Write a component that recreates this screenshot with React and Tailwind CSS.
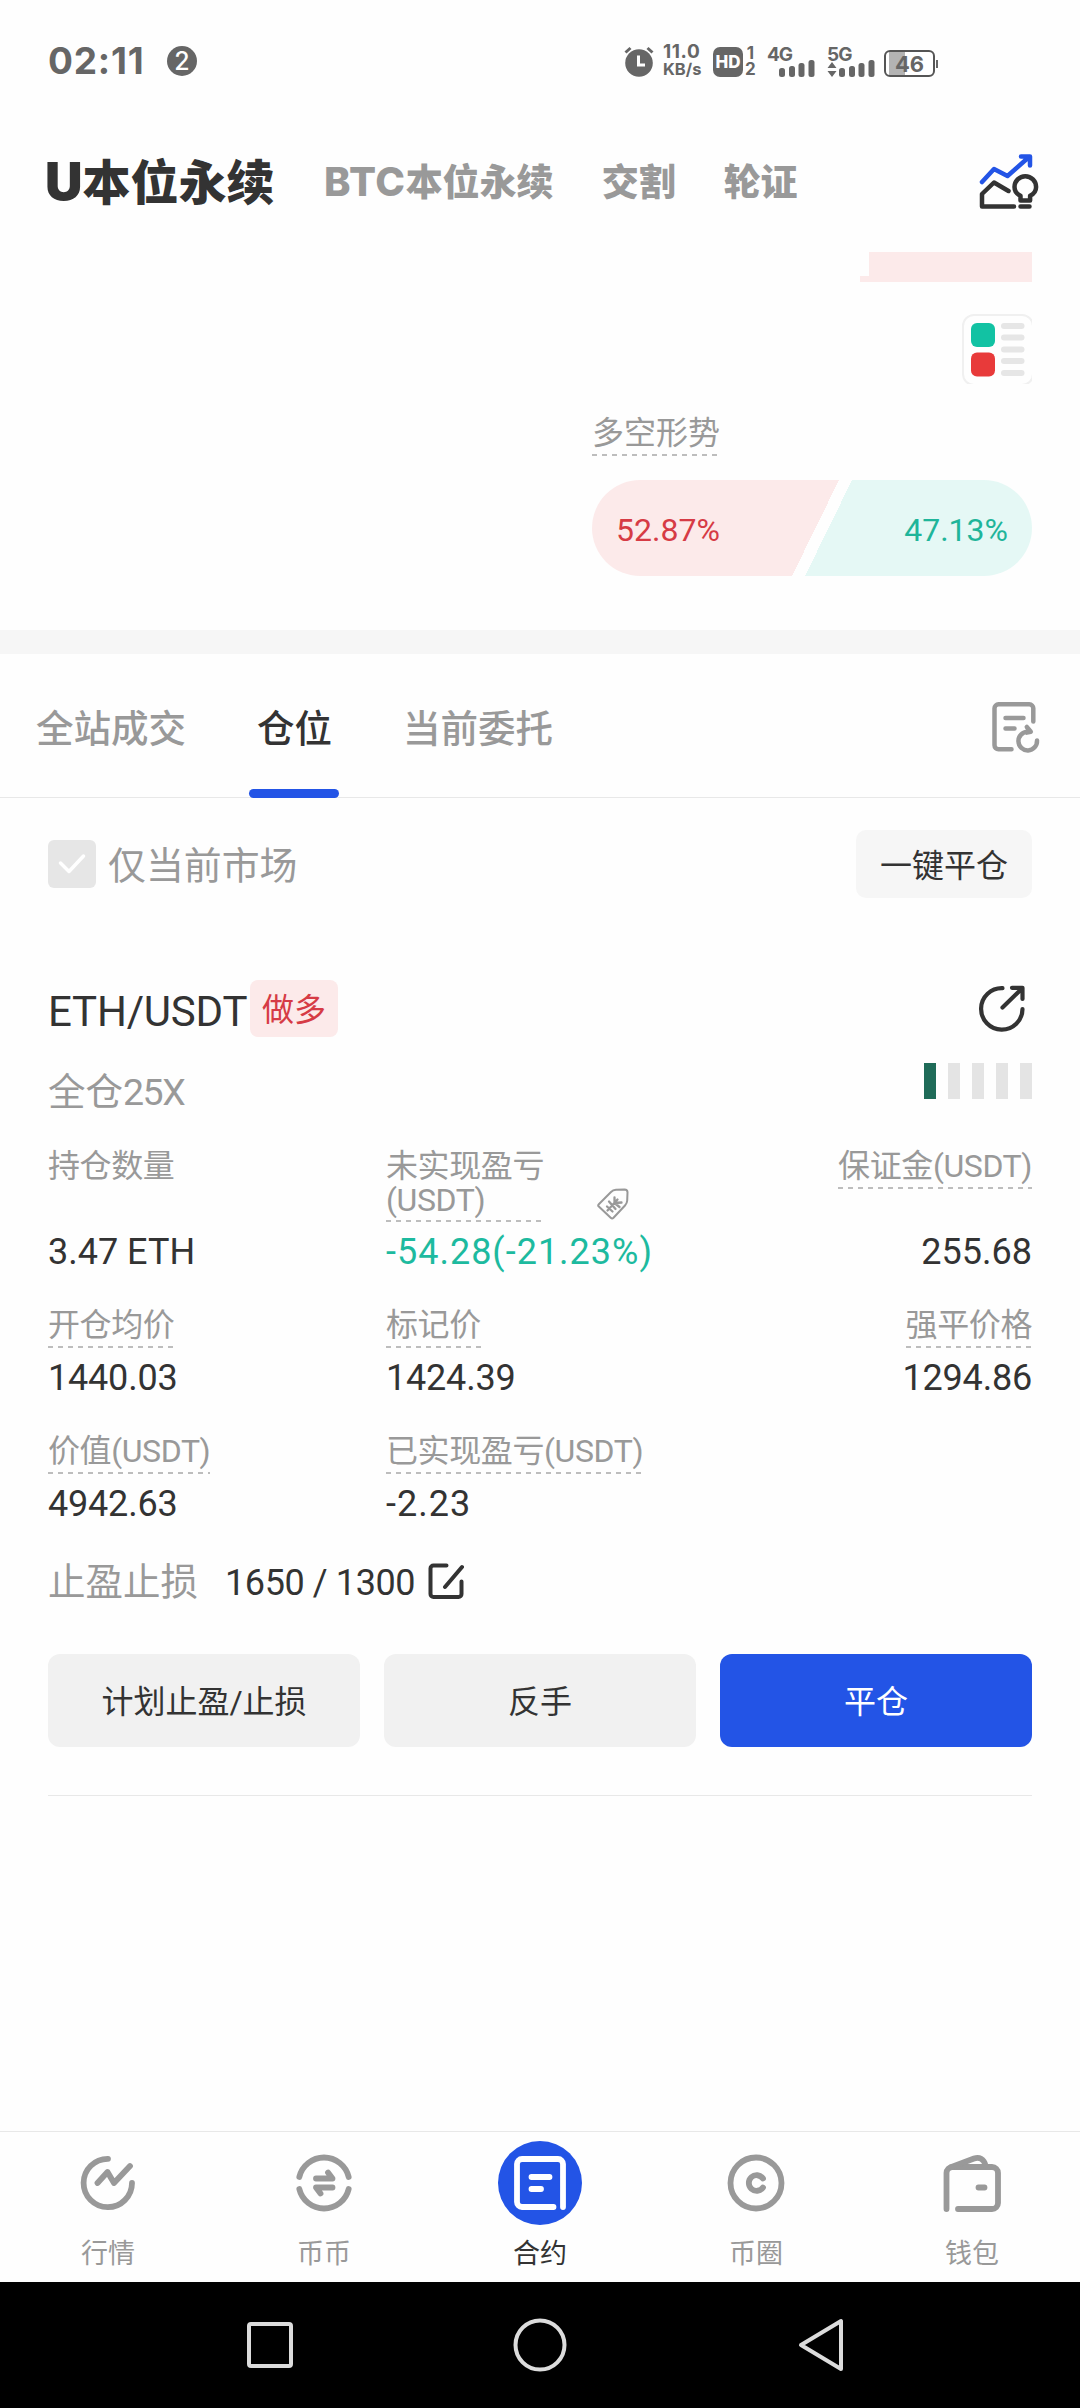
import { clsx } from 'clsx';

const HEADER_TABS = [
    { latin: 'BTC', label: '本位永续' },
    { label: '交割' },
    { label: '轮证' },
];
const ORDER_TABS = ['全站成交', '仓位', '当前委托'];
const RISK_LEVELS = [1, 2, 3, 4, 5];

const DASH = 'h-[2px] w-full bg-[repeating-linear-gradient(90deg,#bdbdbd_0_5px,transparent_5px_10px)]';

// Status bar glyphs
const AlarmIcon = () => (
    <svg width="30" height="32" viewBox="0 0 30 32" fill="none">
        <circle cx="15" cy="18" r="13.800" fill="#666" />
        <path d="M1.500 7.500 6.500 3M28.500 7.500 23.500 3" stroke="#666" strokeWidth="3" />
        <path d="M14.500 10.500v9.500h6.500" stroke="#fff" strokeWidth="3" />
    </svg>
);

const SignalBars = () => (
    <svg width="36" height="17" viewBox="0 0 36 17" fill="#666">
        <rect x="0" y="8" width="6" height="9" rx="2.500" />
        <rect x="10" y="6" width="6" height="11" rx="2.500" />
        <rect x="19.500" y="3" width="6" height="14" rx="2.500" />
        <rect x="29.500" y="0" width="6" height="17" rx="2.500" />
    </svg>
);

const StatusBar = () => (
    <div className="flex h-[122px] shrink-0 items-center pl-[48px] font-[Inter,'Noto_Sans',sans-serif] text-[#666]">
        <span className="w-[119px] text-[37px] font-bold leading-[40px] tracking-[0.8px]">02:11</span>
        <span className="flex size-[30px] items-center justify-center rounded-full bg-[#666] text-[25px] font-medium leading-none text-white">2</span>

        <div className="ml-[427px] flex h-[32px] items-end">
            <AlarmIcon />
            <div className="ml-[9px] flex w-[40px] flex-col text-[19px] font-bold leading-[16.500px] tracking-[0.6px]">
                <span>11.0</span>
                <span className="whitespace-nowrap text-[16.500px] tracking-normal">KB/s</span>
            </div>
            <span className="ml-[10px] flex size-[30px] items-center justify-center rounded-[7px] bg-[#666] text-[17px] font-extrabold leading-none text-white">HD</span>
            <div className="ml-[2px] flex w-[11px] flex-col text-[17px] font-bold leading-[16px]">
                <span className="text-center">1</span>
                <span>2</span>
            </div>
            <div className="relative ml-[11px] flex h-[32px] w-[48px] items-end justify-end">
                <span className="absolute left-0 top-0 text-[19px] font-bold leading-[19px] tracking-[-1px]">4G</span>
                <SignalBars />
            </div>
            <div className="relative ml-[12px] flex h-[32px] w-[48px] items-end justify-end">
                <span className="absolute left-0 top-0 text-[19px] font-bold leading-[19px] tracking-[-1px]">5G</span>
                <svg className="absolute bottom-0 left-0" width="10" height="15" viewBox="0 0 10 15" fill="#666">
                    <path d="M5 0 9.500 6H.5zM5 15 .5 9h9z" />
                </svg>
                <SignalBars />
            </div>
            <div className="ml-[9px] flex items-center">
                <div className="flex h-[27px] w-[51px] items-center justify-center rounded-[6px] border-2 border-[#555] bg-[linear-gradient(90deg,#fff_0_3px,#b3b3b3_3px_19px,#fff_19px)] text-[22px] font-bold leading-none">46</div>
                <span className="ml-px h-[8px] w-[2px] bg-[#666]" />
            </div>
        </div>
    </div>
);

const TrendIcon = () => (
    <svg width="60" height="56" viewBox="0 0 60 56" fill="none" strokeWidth="4.500" strokeLinecap="round" strokeLinejoin="round">
        <path d="M3 29 15 16l13.500 7L50 4M42 3.500h9v9" stroke="#2354e6" />
        <path d="M29.500 38 15 29.500 3 41v12.500h32M41.500 53.500h9" stroke="#333" />
        <path d="M41.500 47.500v-4.800c-3.400-1.600-6-4.600-6-8.700a10.800 10.800 0 0 1 21.600 0c0 4.100-2.600 7.100-6 8.700v4.800z" stroke="#333" />
    </svg>
);

const DepthIcon = () => (
    <svg width="70" height="70" viewBox="0 0 70 70" fill="none">
        <rect x="1" y="1" width="70" height="70" rx="11" stroke="#f0f0f0" strokeWidth="2" />
        <rect x="9" y="9" width="24" height="24" rx="6" fill="#12c2a3" />
        <rect x="9" y="38.500" width="24" height="24" rx="6" fill="#e83a3a" />
        {[9, 20.5, 32.5, 44, 56].map(y => (
            <rect key={y} x="39" y={y} width="23.500" height="6" rx="3" fill="#e6e6e6" />
        ))}
    </svg>
);

const RecordIcon = () => (
    <svg className="overflow-visible" width="48" height="52" viewBox="0 0 48 52" fill="none" stroke="#999" strokeWidth="4.500" strokeLinecap="round" strokeLinejoin="round">
        <path d="M41.300 21.500V8.300a4 4 0 0 0-4-4H6.500a4 4 0 0 0-4 4v37a4 4 0 0 0 4 4h13" />
        <path d="M13.500 18h18M13.500 28.500h9" />
        <path d="M45 40.500a9.300 9.300 0 1 1-9.300-8.700M34.800 27l4 4.800-4 .8" />
    </svg>
);

const ShareIcon = () => (
    <svg width="48" height="48" viewBox="0 0 48 48" fill="none" stroke="#333" strokeWidth="4.200" strokeLinecap="round" strokeLinejoin="round">
        <path d="M24.500 3.200A20.700 20.700 0 1 0 44.500 24" />
        <path d="M24.500 22.500 43.500 4M34 2.800h10.500V14" />
    </svg>
);

const TagIcon = () => (
    <svg width="32" height="32" viewBox="0 0 32 32" fill="none" stroke="#999" strokeWidth="2" strokeLinecap="round" strokeLinejoin="round">
        <path d="M1.800 16.200 14 4c1.500-1.500 3-2 5-2.200l8.500-.4c2 0 3 .9 3 2.800l-.3 8.300c-.1 2-.8 3.500-2.200 5L16.500 29.800a2 2 0 0 1-2.800 0L1.800 18.600a1.700 1.700 0 0 1 0-2.400Z" />
        <path d="M12 13.500 18.500 21M10 18.500l5.500 5M10.500 22.500l10-11M17.500 9.500v5.500l7-.5M17.500 15l5 4" strokeWidth="2.300" />
    </svg>
);

const EditIcon = () => (
    <svg width="36" height="37" viewBox="0 0 36 37" fill="none" stroke="#333" strokeWidth="4" strokeLinecap="round" strokeLinejoin="round">
        <path d="M18.500 2.500H5.500a3 3 0 0 0-3 3v25.500a3 3 0 0 0 3 3h25a3 3 0 0 0 3-3V18.500" />
        <path d="M17 24 34 4" />
    </svg>
);

// Bottom navigation
const NAV_ITEMS = [
    {
        label: '行情',
        icon: (
            <>
                <path d="M30 5.800A24.200 24.200 0 1 0 54 30" />
                <path d="M19.500 30 29.500 19l6.500 11 16-17" />
            </>
        ),
    },
    {
        label: '币币',
        icon: (
            <>
                <path d="M5.300 24a25.400 25.400 0 0 1 49.400 0M5.300 36a25.400 25.400 0 0 0 49.400 0" />
                <path d="M22 25.500h16.500L34 19.500M38.500 34.500H22l4.500 6" />
            </>
        ),
    },
    { label: '合约', active: true },
    {
        label: '币圈',
        icon: (
            <>
                <circle cx="30" cy="30" r="25.500" />
                <path d="M37 25.500a7.800 7.800 0 1 0 0 9" />
            </>
        ),
    },
    {
        label: '钱包',
        icon: (
            <>
                <path d="M4.500 56V20a6 6 0 0 1 6-6H50a6 6 0 0 1 6 6v30a6 6 0 0 1-6 6H16" />
                <path d="M9.500 14 32 5.500c5-1.800 10 0 11.500 7M36.500 34.500h6" />
            </>
        ),
    },
];

const NavItem = ({ item }) => (
    <div className="flex w-[216px] flex-col items-center pt-[9px]">
        <div className={clsx('flex size-[84px] items-center justify-center rounded-full', item.active && 'bg-[#2354e6]')}>
            <svg width="60" height="60" viewBox="0 0 60 60" fill="none" stroke={item.active ? '#fff' : '#999'} strokeWidth="5.800" strokeLinecap="round" strokeLinejoin="round">
                {item.active ? (
                    <path d="M53 54V11a5 5 0 0 0-5-5H12a5 5 0 0 0-5 5v38a5 5 0 0 0 5 5h31.500M21.500 24h18M21.500 36H31" />
                ) : item.icon}
            </svg>
        </div>
        <span className={clsx('mt-[12px] text-[27px] leading-[34px]', item.active ? 'text-[#333]' : 'text-[#999]')}>{item.label}</span>
    </div>
);

// Label with a dashed underline and its value
const Field = ({ label, value, right }) => (
    <div className={clsx('flex flex-col', right ? 'items-end' : 'items-start')}>
        <div className="h-[40px]">
            <div className="h-[38px] whitespace-nowrap text-[32px] leading-[34px] tracking-[-0.4px] text-[#999]">{label}</div>
            <div className={DASH} />
        </div>
        <div className={clsx('text-[36px] leading-[60px] text-[#333]', value.startsWith('-') ? 'tracking-[1px]' : 'tracking-[-0.2px]')}>{value}</div>
    </div>
);

export default function App() {
    return (
        <div className="flex h-[2408px] w-[1080px] flex-col overflow-hidden bg-[#fefefe] font-[Roboto,'Noto_Sans_CJK_SC',sans-serif] text-[#333]">
            <StatusBar />

            <header className="flex h-[118px] shrink-0 items-center pl-[45px] pr-[41px] font-[Inter,'Noto_Sans_CJK_SC',sans-serif]">
                <h1 className="w-[279px] whitespace-nowrap pt-[2px] text-[48px] font-black leading-[60px]">
                    <span className="text-[52px]">U</span>本位永续
                </h1>
                <div className="flex items-baseline gap-[48px] pt-[2px] text-[37px] font-extrabold leading-[60px] text-[#999]">
                    {HEADER_TABS.map(tab => (
                        <span key={tab.label} className="whitespace-nowrap">
                            {tab.latin && <span className="text-[40px] tracking-[0.6px]">{tab.latin}</span>}
                            {tab.label}
                        </span>
                    ))}
                </div>
                <div className="ml-auto"><TrendIcon /></div>
            </header>

            {/* Order book tail and long/short ratio */}
            <section className="flex h-[390px] shrink-0 flex-col items-end px-[48px] pt-[12px]">
                <div className="h-[24px] w-[163px] bg-[#fceaea]" />
                <div className="h-[6px] w-[172px] bg-[#fceaea]" />
                <div className="mt-[32px]"><DepthIcon /></div>
                <div className="mt-[24px] w-[440px]">
                    <div className="w-[126px]">
                        <div className="h-[46px] whitespace-nowrap text-[32px] leading-[50px] text-[#999]">多空形势</div>
                        <div className={DASH} />
                    </div>
                </div>
                <div className="mt-[24px] flex h-[96px] w-[440px] items-center justify-between overflow-hidden rounded-full bg-[linear-gradient(116.1deg,#fceaea_0_50.72%,#fefefe_50.72%_53.39%,#e5f8f5_53.39%)] px-[24px] pt-[3px] text-[32px]">
                    <span className="text-[#d63b45]">52.87%</span>
                    <span className="text-[#1fb59a]">47.13%</span>
                </div>
            </section>

            <div className="h-[24px] shrink-0 bg-[#f6f6f6]" />

            <nav className="flex h-[144px] shrink-0 items-stretch border-b border-[#e8e8e8] pl-[36px] pr-[40px]">
                <div className="flex gap-[63px]">
                    {ORDER_TABS.map((tab, i) => (
                        <div key={tab} className={clsx('relative flex items-center pt-[8px] text-[37.500px] font-medium', i === 1 ? 'px-[8px] text-[#333]' : 'text-[#999]')}>
                            {tab}
                            {i === 1 && <span className="absolute -bottom-px left-0 h-[9px] w-[90px] rounded-full bg-[#2354e6]" />}
                        </div>
                    ))}
                </div>
                <div className="ml-auto flex items-center"><RecordIcon /></div>
            </nav>

            <div className="flex h-[132px] shrink-0 items-center px-[48px]">
                <span className="flex size-[48px] items-center justify-center rounded-[6px] bg-[#e6e6e6]">
                    <svg width="28" height="22" viewBox="0 0 28 22" fill="none" stroke="#fff" strokeWidth="3.500" strokeLinecap="round" strokeLinejoin="round">
                        <path d="M2.500 10 11 18.500 25.500 3" />
                    </svg>
                </span>
                <span className="ml-[12px] pt-[5px] text-[37.900px] text-[#999]">仅当前市场</span>
                <button className="ml-auto h-[68px] w-[176px] rounded-[10px] bg-[#f6f6f6] pt-[3px] text-[32px]">一键平仓</button>
            </div>

            <main className="flex flex-1 flex-col px-[48px] pt-[50px]">
                <div className="flex h-[57px] items-center">
                    <span className="w-[202px] pt-[5px] text-[42px] tracking-[-0.2px]">ETH/USDT</span>
                    <span className="flex h-[57px] w-[88px] items-center justify-center rounded-[8px] bg-[#fceaea] pt-[3px] text-[32px] text-[#d63b45]">做多</span>
                    <div className="ml-auto mr-[6px]"><ShareIcon /></div>
                </div>

                <div className="mt-[26px] flex h-[56px] items-start justify-between">
                    <span className="text-[37.500px] leading-[59px] text-[#999]">全仓<span className="tracking-[-1.5px]">25X</span></span>
                    <div className="flex gap-[12px]">
                        {RISK_LEVELS.map(level => (
                            <span key={level} className={clsx('h-[36px] w-[12px]', level === 1 ? 'bg-[#1f6b58]' : 'bg-[#e4e4e4]')} />
                        ))}
                    </div>
                </div>

                <div className="mt-[29px] grid h-[160px] grid-cols-[338px_1fr_auto] text-[32px] leading-[34px] tracking-[-0.4px] text-[#999]">
                    <div>
                        <div className="h-[79px] pt-px">持仓数量</div>
                        <div className="text-[36px] leading-[50px] tracking-normal text-[#333]">3.47 ETH</div>
                    </div>
                    <div>
                        <div className="flex h-[79px]">
                            <div className="w-[158px]">
                                <div className="h-[72px] pt-px">未实现盈亏<br />(USDT)</div>
                                <div className={DASH} />
                            </div>
                            <div className="ml-[53px] mt-[40px]"><TagIcon /></div>
                        </div>
                        <div className="text-[36px] leading-[50px] tracking-[1px] text-[#1dba9f]">-54.28(-21.23%)</div>
                    </div>
                    <div className="text-right">
                        <div className="h-[79px]">
                            <div className="h-[39px] pt-px">保证金(USDT)</div>
                            <div className={DASH} />
                        </div>
                        <div className="text-[36px] leading-[50px] tracking-normal text-[#333]">255.68</div>
                    </div>
                </div>

                <div className="grid grid-cols-[338px_1fr_auto] gap-y-[26px]">
                    <Field label="开仓均价" value="1440.03" />
                    <Field label="标记价" value="1424.39" />
                    <Field label="强平价格" value="1294.86" right />
                    <Field label="价值(USDT)" value="4942.63" />
                    <Field label="已实现盈亏(USDT)" value="-2.23" />
                </div>

                <div className="mt-[22px] flex h-[50px] items-center">
                    <span className="w-[177px] pt-[3px] text-[37.500px] text-[#999]">止盈止损</span>
                    <span className="w-[203px] whitespace-nowrap pt-[3px] text-[36px] tracking-[-0.4px]">1650 / 1300</span>
                    <EditIcon />
                </div>

                <div className="mt-[48px] grid h-[93px] grid-cols-3 gap-[24px] text-[32px]">
                    <button className="rounded-[12px] bg-[#f1f1f1] pt-[3px]">计划止盈/止损</button>
                    <button className="rounded-[12px] bg-[#f1f1f1] pt-[3px]">反手</button>
                    <button className="rounded-[12px] bg-[#2354e6] pt-[3px] text-white">平仓</button>
                </div>
                <div className="mt-[48px] h-px bg-[#e8e8e8]" />
            </main>

            <footer className="flex h-[151px] shrink-0 border-t border-[#e8e8e8]">
                {NAV_ITEMS.map(item => <NavItem key={item.label} item={item} />)}
            </footer>

            {/* Android system keys */}
            <div className="flex h-[126px] shrink-0 items-center justify-between bg-black px-[236px]">
                <svg width="68" height="60" viewBox="0 0 68 60" fill="none" stroke="#dcdcdc" strokeWidth="4">
                    <rect x="13" y="9" width="42" height="42" rx="2" />
                </svg>
                <svg width="68" height="60" viewBox="0 0 68 60" fill="none" stroke="#dcdcdc" strokeWidth="4">
                    <circle cx="34" cy="30" r="24.500" />
                </svg>
                <svg width="68" height="60" viewBox="-8 0 68 60" fill="none" stroke="#dcdcdc" strokeWidth="4" strokeLinejoin="round">
                    <path d="M17 30 57 6v48z" />
                </svg>
            </div>
        </div>
    );
}
